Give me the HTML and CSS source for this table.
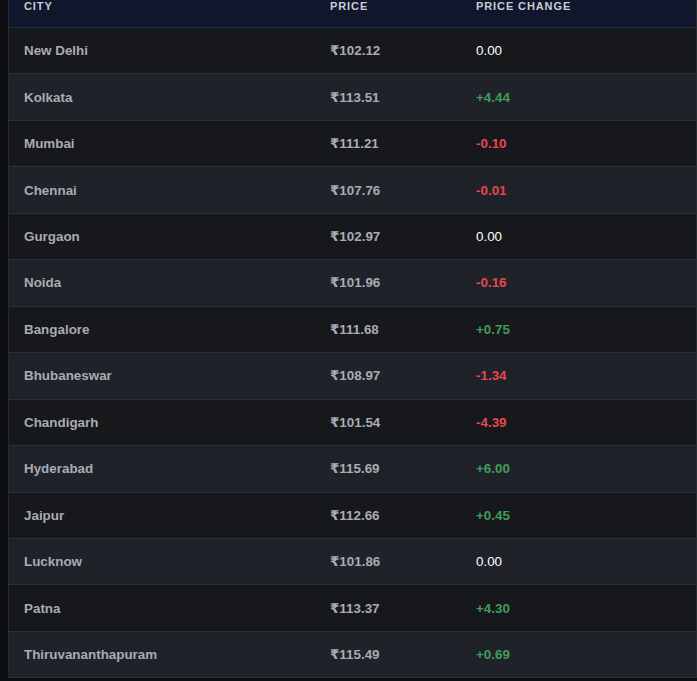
FILE: index.html
```html
<!DOCTYPE html>
<html>
<head>
<meta charset="utf-8">
<link rel="stylesheet" href="styles.css">
</head>
<body>
<div class="table">
  <div class="row head">
    <div class="cell">CITY</div>
    <div class="cell">PRICE</div>
    <div class="cell">PRICE CHANGE</div>
  </div>
  <div class="row"><div class="cell">New Delhi</div><div class="cell">₹102.12</div><div class="cell zero">0.00</div></div>
  <div class="row"><div class="cell">Kolkata</div><div class="cell">₹113.51</div><div class="cell up">+4.44</div></div>
  <div class="row"><div class="cell">Mumbai</div><div class="cell">₹111.21</div><div class="cell down">-0.10</div></div>
  <div class="row"><div class="cell">Chennai</div><div class="cell">₹107.76</div><div class="cell down">-0.01</div></div>
  <div class="row"><div class="cell">Gurgaon</div><div class="cell">₹102.97</div><div class="cell zero">0.00</div></div>
  <div class="row"><div class="cell">Noida</div><div class="cell">₹101.96</div><div class="cell down">-0.16</div></div>
  <div class="row"><div class="cell">Bangalore</div><div class="cell">₹111.68</div><div class="cell up">+0.75</div></div>
  <div class="row"><div class="cell">Bhubaneswar</div><div class="cell">₹108.97</div><div class="cell down">-1.34</div></div>
  <div class="row"><div class="cell">Chandigarh</div><div class="cell">₹101.54</div><div class="cell down">-4.39</div></div>
  <div class="row"><div class="cell">Hyderabad</div><div class="cell">₹115.69</div><div class="cell up">+6.00</div></div>
  <div class="row"><div class="cell">Jaipur</div><div class="cell">₹112.66</div><div class="cell up">+0.45</div></div>
  <div class="row"><div class="cell">Lucknow</div><div class="cell">₹101.86</div><div class="cell zero">0.00</div></div>
  <div class="row"><div class="cell">Patna</div><div class="cell">₹113.37</div><div class="cell up">+4.30</div></div>
  <div class="row"><div class="cell">Thiruvananthapuram</div><div class="cell">₹115.49</div><div class="cell up">+0.69</div></div>
</div>
</body>
</html>
```

FILE: styles.css
```css
html, body {
  margin: 0;
  padding: 0;
  background: #0c0e12;
  height: 100%;
  overflow: hidden;
}
body {
  padding-left: 8px;
  font-family: "Liberation Sans", Arial, "DejaVu Sans", sans-serif;
}
.table {
  border-left: 1px solid #262a31;
  border-right: 1px solid #262a31;
  display: flex;
  flex-direction: column;
}
.row {
  display: grid;
  grid-template-columns: 306px 146px 1fr;
  height: 46.46px;
  box-sizing: border-box;
  border-bottom: 1px solid #28323a;
  align-items: center;
  font-size: 13.4px;
  font-weight: bold;
  color: #a8acb4;
  background: #16181c;
}
.row:nth-child(odd) {
  background: #1f2229;
}
.row.head {
  height: 28px;
  background: #10162b;
  color: #c9cdd5;
  font-size: 11px;
  letter-spacing: 0.9px;
  align-items: start;
  border-bottom: 1px solid #222c38;
}
.cell {
  padding-left: 15px;
  white-space: nowrap;
}
.head .cell {
  line-height: 12px;
}
.zero { color: #ffffff; font-weight: normal; }
.up { color: #3f9d5a; }
.down { color: #e5484d; }
```
